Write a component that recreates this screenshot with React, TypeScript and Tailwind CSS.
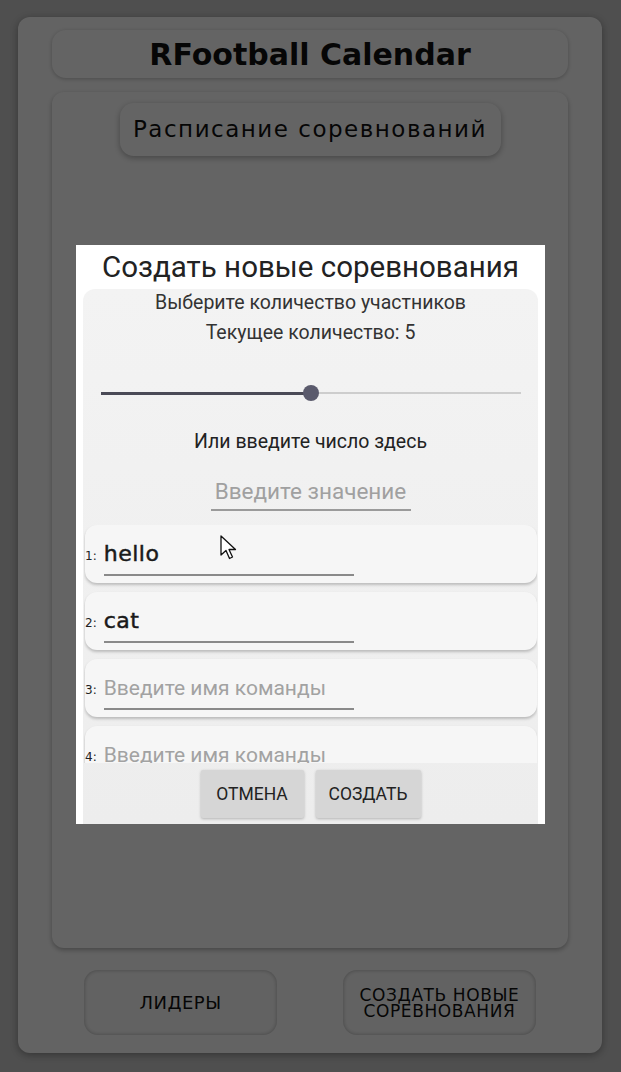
import React from 'react';

const tech = { fontFamily: '"DejaVu Sans", "Liberation Sans", sans-serif' };
const roboto = { fontFamily: 'Roboto, "Noto Sans", sans-serif' };

const teams = [
  { n: 1, value: 'hello' },
  { n: 2, value: 'cat' },
  { n: 3, value: '' },
  { n: 4, value: '' },
];

function TeamRow({ n, value }: { n: number; value: string }) {
  return (
    <div className="h-[58px] shrink-0 rounded-[12px] bg-[#f6f6f6] shadow-[0_2px_3px_rgba(0,0,0,0.22)] flex items-center">
      <span className="text-[12px] text-[#222] mt-[4px]" style={tech}>
        {n}:
      </span>
      <div className="ml-[7px] w-[250px] pt-[8px] pb-[6px] border-b-2 border-[#8a8a8a]">
        {value ? (
          <p
            className="text-[22px] leading-[28px] text-[#1a1a1a] tracking-[0.5px] [-webkit-text-stroke:0.5px_#1a1a1a]"
            style={tech}
          >
            {value}
          </p>
        ) : (
          <p className="text-[21px] leading-[28px] text-[#a2a2a2] whitespace-nowrap" style={roboto}>
            Введите имя команды
          </p>
        )}
      </div>
    </div>
  );
}

export default function App() {
  return (
    <div className="relative w-full h-[1072px] bg-[#c6c6c6] overflow-hidden">
      {/* Main screen */}
      <div className="absolute left-[18px] top-[17px] w-[584px] h-[1036px] rounded-[12px] bg-[#f8f8f8] shadow-[0_2px_8px_rgba(0,0,0,0.35)] flex flex-col px-[34px] pt-[13px] pb-[18px]">
        <div className="h-[48px] shrink-0 rounded-[14px] bg-[#fafafa] shadow-[0_1px_4px_rgba(0,0,0,0.25)] flex items-center justify-center">
          <h1 className="text-[30px] font-bold text-[#111]" style={tech}>
            RFootball Calendar
          </h1>
        </div>

        <div className="mt-[14px] flex-1 rounded-[12px] bg-[#fafafa] shadow-[0_2px_5px_rgba(0,0,0,0.3)] flex flex-col items-center pt-[11px]">
          <div className="w-[381px] h-[53px] rounded-[14px] bg-[#fbfbfb] shadow-[0_2px_6px_rgba(0,0,0,0.3)] flex items-center justify-center">
            <span className="text-[23px] text-[#111] tracking-[1.5px]" style={tech}>
              Расписание соревнований
            </span>
          </div>
        </div>

        <div className="mt-[22px] h-[65px] shrink-0 flex justify-between px-[32px]">
          <div className="w-[193px] rounded-[14px] bg-[#f6f6f6] shadow-[inset_0_0_4px_rgba(0,0,0,0.3)] flex items-center justify-center">
            <span className="text-[18px] text-[#111] tracking-[0.5px]" style={tech}>
              ЛИДЕРЫ
            </span>
          </div>
          <div className="w-[193px] rounded-[14px] bg-[#f6f6f6] shadow-[inset_0_0_4px_rgba(0,0,0,0.3)] flex flex-col items-center justify-center">
            <span className="block text-[17px] leading-[16px] text-[#111] tracking-[0.6px]" style={tech}>
              СОЗДАТЬ НОВЫЕ
            </span>
            <span className="block text-[17px] leading-[16px] text-[#111] tracking-[0.6px]" style={tech}>
              СОРЕВНОВАНИЯ
            </span>
          </div>
        </div>
      </div>

      {/* Dim overlay */}
      <div className="absolute inset-0 bg-black/60" />

      {/* Dialog */}
      <div className="absolute left-[76px] top-[245px] w-[469px] h-[579px] bg-white flex flex-col" style={roboto}>
        <div className="h-[44px] shrink-0 flex items-center justify-center">
          <h2 className="text-[29.5px] text-[#222] whitespace-nowrap">Создать новые соревнования</h2>
        </div>

        <div className="flex-1 mx-[7px] rounded-t-[12px] bg-gradient-to-b from-[#f3f3f3] to-[#ededed] flex flex-col items-center">
          <p className="text-[19.5px] leading-[26px] text-[#333] mt-[1px]">Выберите количество участников</p>
          <p className="text-[19.5px] leading-[34px] text-[#333]">Текущее количество: 5</p>

          <div className="mt-[35px] w-[420px] h-[16px] relative flex items-center">
            <div className="w-[210px] h-[3px] bg-[#4a4a56]" />
            <div className="flex-1 h-[2px] bg-[#cdcdcd]" />
            <div className="absolute left-[202px] top-0 w-[16px] h-[16px] rounded-full bg-[#5a5a6c]" />
          </div>

          <p className="mt-[29px] text-[19.5px] leading-[24px] text-[#222]">Или введите число здесь</p>

          <div className="mt-[23px] w-[200px] border-b-2 border-[#9a9a9a] pb-[3px] text-center">
            <span className="text-[22.5px] leading-[28px] text-[#a0a0a0] whitespace-nowrap">Введите значение</span>
          </div>

          <div className="mt-[14px] w-[453px] h-[238px] overflow-hidden flex flex-col gap-[9px] pl-[1px] pt-0">
            {teams.map((t) => (
              <TeamRow key={t.n} n={t.n} value={t.value} />
            ))}
          </div>

          <div className="mt-[7px] flex gap-[12px] pb-[6px]">
            <button className="w-[103px] h-[48px] bg-[#d6d6d6] shadow-[0_1px_3px_rgba(0,0,0,0.25)] text-[17.5px] text-[#222] rounded-[2px]">
              ОТМЕНА
            </button>
            <button className="w-[105px] h-[48px] bg-[#d6d6d6] shadow-[0_1px_3px_rgba(0,0,0,0.25)] text-[17.5px] text-[#222] rounded-[2px]">
              СОЗДАТЬ
            </button>
          </div>
        </div>
      </div>

      {/* Mouse pointer */}
      <svg className="absolute left-[220px] top-[535px]" width="18" height="26" viewBox="0 0 18 26">
        <path d="M1 1 L1 20 L6 15.5 L9.5 23.5 L12.5 22 L9 14.5 L15.5 14.5 Z" fill="#fff" stroke="#111" strokeWidth="1.3" strokeLinejoin="round" />
      </svg>
    </div>
  );
}
